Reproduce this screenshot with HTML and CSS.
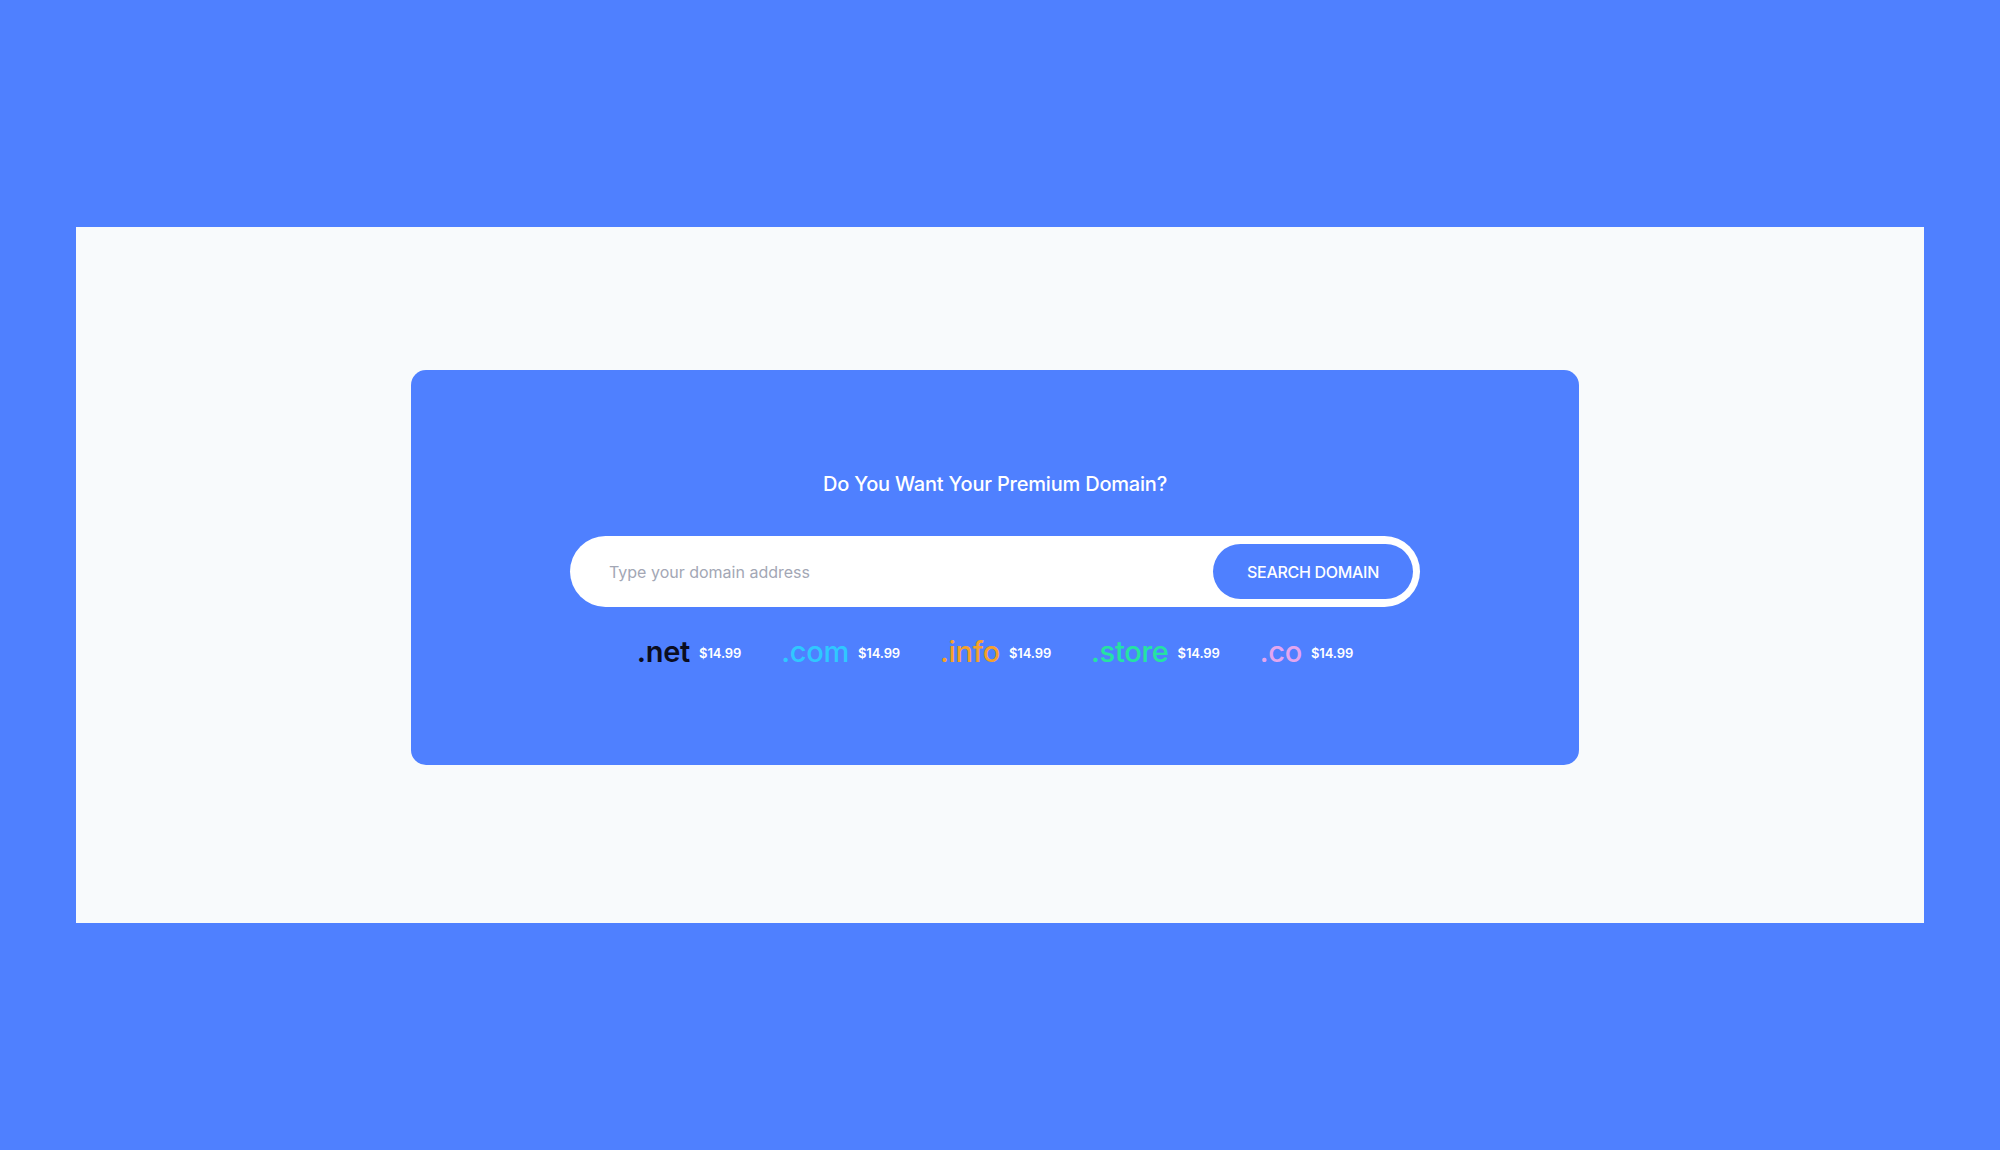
FILE: index.html
```html
<!DOCTYPE html>
<html lang="en">
<head>
<meta charset="utf-8">
<title>Premium Domain</title>
<link rel="stylesheet" href="styles.css">
</head>
<body>
<div class="panel">
  <section class="card">
    <h2 class="title">Do You Want Your Premium Domain?</h2>
    <form class="search" onsubmit="return false">
      <input class="search-input" type="text" placeholder="Type your domain address">
      <button class="search-btn" type="submit">SEARCH DOMAIN</button>
    </form>
    <ul class="tlds">
      <li class="tld"><span class="ext ext-net">.net</span><span class="price">$14.99</span></li>
      <li class="tld"><span class="ext ext-com">.com</span><span class="price">$14.99</span></li>
      <li class="tld"><span class="ext ext-info">.info</span><span class="price">$14.99</span></li>
      <li class="tld"><span class="ext ext-store">.store</span><span class="price">$14.99</span></li>
      <li class="tld"><span class="ext ext-co">.co</span><span class="price">$14.99</span></li>
    </ul>
  </section>
</div>
</body>
</html>
```
FILE: styles.css
```css
html, body {
  margin: 0;
  padding: 0;
}
body {
  background: #4f80ff;
  font-family: Inter, "Noto Sans", "Liberation Sans", sans-serif;
  height: 1150px;
  padding-top: 227px;
  box-sizing: border-box;
}
.panel {
  margin: 0 76px;
  height: 696px;
  background: #f8fafc;
  padding-top: 143px;
  box-sizing: border-box;
}
.card {
  width: 1168px;
  height: 395px;
  margin: 0 0 0 335px;
  background: #4f80ff;
  border-radius: 15px;
  box-sizing: border-box;
  padding-top: 102px;
  display: flex;
  flex-direction: column;
  align-items: center;
}
.title {
  margin: 0;
  color: #ffffff;
  font-size: 20px;
  line-height: 24px;
  font-weight: 500;
  letter-spacing: -0.2px;
}
.search {
  margin-top: 40px;
  width: 850px;
  height: 71px;
  background: #ffffff;
  border-radius: 36px;
  box-sizing: border-box;
  padding: 8px 7px 8px 39px;
  display: flex;
  align-items: center;
}
.search-input {
  flex: 1;
  border: 0;
  outline: none;
  background: transparent;
  font-family: inherit;
  font-size: 16px;
  color: #333;
  padding: 0;
}
.search-input::placeholder {
  color: #a3a7b5;
}
.search-btn {
  width: 200px;
  height: 55px;
  border: 0;
  border-radius: 28px;
  background: #4f80ff;
  color: #ffffff;
  font-family: inherit;
  font-size: 16px;
  font-weight: 500;
  letter-spacing: -0.3px;
  cursor: pointer;
}
.tlds {
  list-style: none;
  margin: 27px 0 0;
  padding: 0;
  display: flex;
  gap: 40px;
  align-items: center;
}
.tld {
  display: flex;
  align-items: center;
  gap: 9px;
}
.ext {
  font-size: 29px;
  line-height: 36px;
  font-weight: 500;
  letter-spacing: -0.3px;
}
.ext-net { color: #0b0d1f; font-weight: 600; }
.ext-com { color: #2fc8ff; }
.ext-info { color: #f4a02a; }
.ext-store { color: #25e3a2; }
.ext-co { color: #e3a6ef; }
.price {
  color: #ffffff;
  font-size: 13px;
  font-weight: 600;
  letter-spacing: -0.1px;
  padding-top: 2px;
}
```
